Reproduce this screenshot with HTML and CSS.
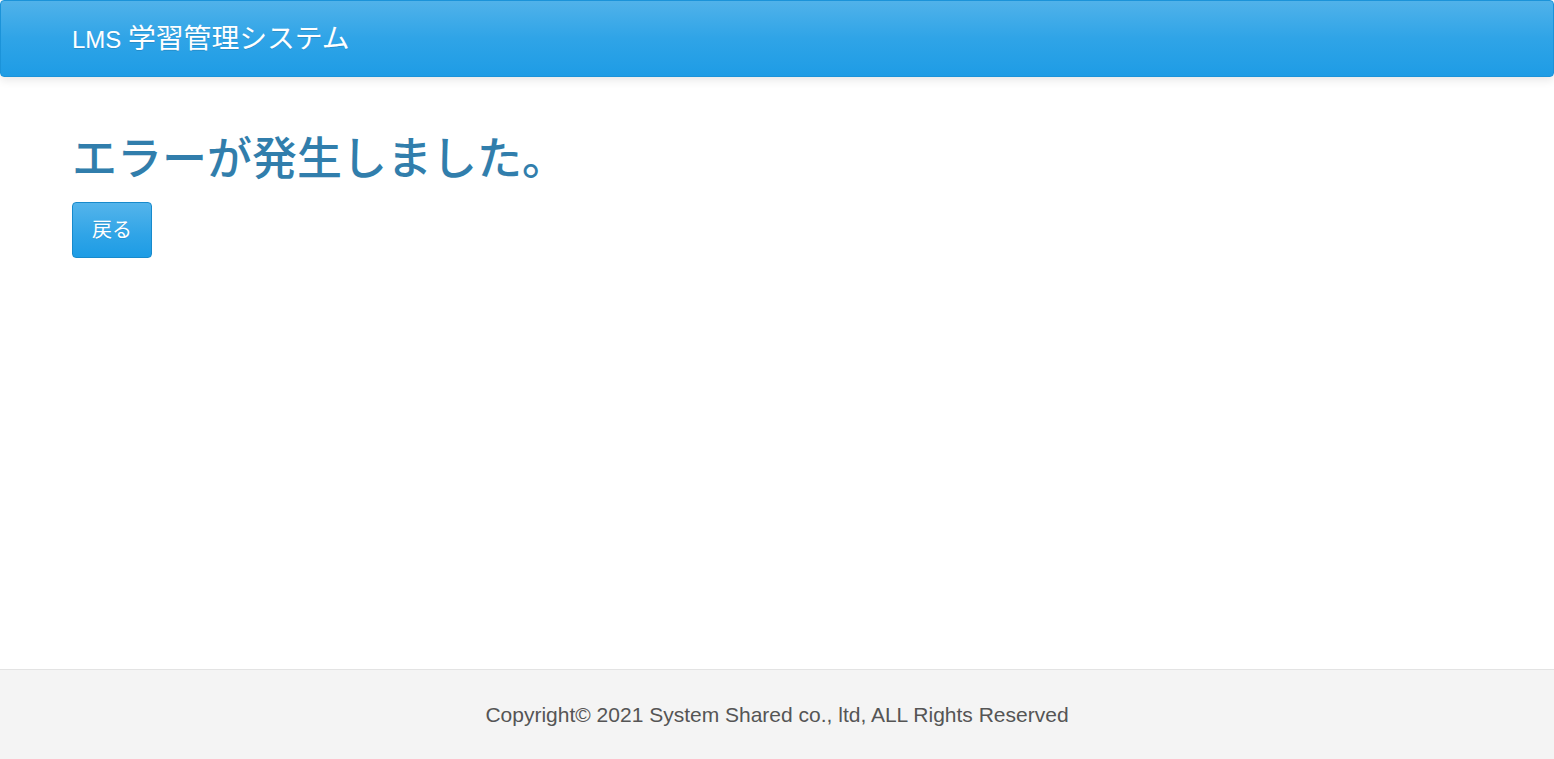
FILE: index.html
```html
<!DOCTYPE html>
<html lang="ja">
<head>
<meta charset="utf-8">
<title>LMS 学習管理システム</title>
<link rel="stylesheet" href="styles.css">
</head>
<body>
<div class="page">
  <nav class="navbar">
    <a class="brand" href="#">LMS <span class="brand-jp">学習管理システム</span></a>
  </nav>
  <main class="content">
    <h1 class="title">エラーが発生しました。</h1>
    <a class="btn" href="#">戻る</a>
  </main>
  <footer class="footer">
    <p class="copy">Copyright© 2021 System Shared co., ltd, ALL Rights Reserved</p>
  </footer>
</div>
</body>
</html>
```
FILE: styles.css
```css
html, body {
  margin: 0;
  padding: 0;
  background: #ffffff;
}
body {
  font-family: "Liberation Sans", "Noto Sans CJK JP", sans-serif;
}
.page {
  display: flex;
  flex-direction: column;
  min-height: 100vh;
}
.navbar {
  height: 75px;
  border: 1px solid #1b93d9;
  border-radius: 4px;
  background: linear-gradient(to bottom, #50b2ea 0%, #2fa4e7 50%, #1e9ce5 100%);
  box-shadow: 0 3px 10px rgba(0, 0, 0, 0.1);
  display: flex;
  align-items: center;
  padding-left: 71px;
  position: relative;
  z-index: 1;
}
.brand {
  color: #ffffff;
  text-decoration: none;
  font-size: 24px;
  line-height: 30px;
  padding-top: 2px;
  text-shadow: 0 1px 0 rgba(0, 0, 0, 0.12);
}
.brand-jp {
  font-size: 27.8px;
}
.content {
  flex: 1;
  padding: 0 72px;
}
.title {
  margin: 59px 0 18px;
  font-size: 45px;
  line-height: 48px;
  font-weight: 500;
  color: #317eac;
}
.btn {
  display: inline-flex;
  align-items: center;
  justify-content: center;
  box-sizing: border-box;
  width: 80px;
  height: 56px;
  padding-bottom: 3px;
  border: 1px solid #178acc;
  border-radius: 4px;
  background: linear-gradient(to bottom, #54b4eb 0%, #2fa4e7 60%, #1d9ce5 100%);
  color: #ffffff;
  font-size: 20px;
  text-decoration: none;
  text-shadow: 0 1px 0 rgba(0, 0, 0, 0.1);
}
.footer {
  height: 89px;
  border-top: 1px solid #e3e3e3;
  background: #f4f4f4;
  display: flex;
  align-items: center;
  justify-content: center;
}
.copy {
  margin: 0;
  font-size: 21px;
  color: #555555;
}
```
